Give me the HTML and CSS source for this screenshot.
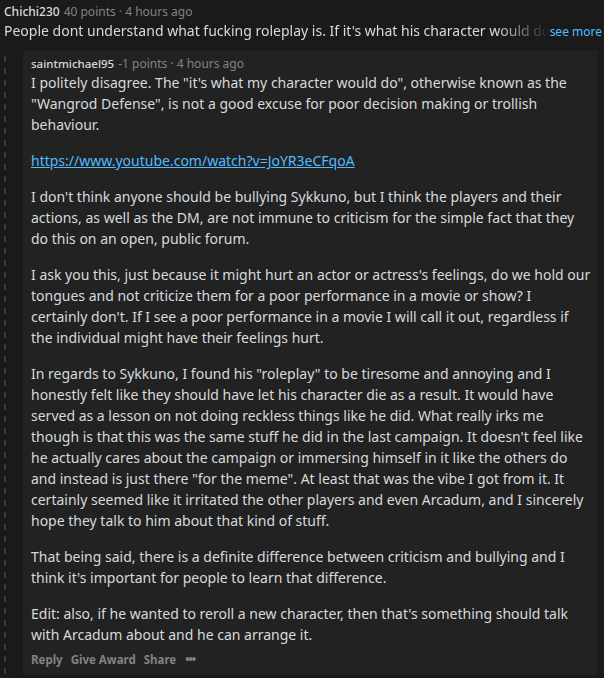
FILE: index.html
```html
<!DOCTYPE html>
<html>
<head>
<meta charset="utf-8">
<link rel="stylesheet" href="styles.css">
</head>
<body>
<div class="page">
  <div class="meta top-meta"><span class="user">Chichi230</span> <span class="sub">40 points · 4 hours ago</span></div>
  <div class="parent-line">
    <span class="parent-text">People dont understand what fucking roleplay is. If it's what his character would do, then it should be fine.</span>
    <a class="see-more">see more</a>
  </div>
  <div class="thread">
    <div class="rail"></div>
    <div class="card">
      <div class="meta"><span class="user small">saintmichael95</span> <span class="sub">-1 points · 4 hours ago</span></div>
      <div class="body">
        <p>I politely disagree. The "it's what my character would do", otherwise known as the "Wangrod Defense", is not a good excuse for poor decision making or trollish behaviour.</p>
        <p><a class="link">https://www.youtube.com/watch?v=JoYR3eCFqoA</a></p>
        <p>I don't think anyone should be bullying Sykkuno, but I think the players and their actions, as well as the DM, are not immune to criticism for the simple fact that they do this on an open, public forum.</p>
        <p>I ask you this, just because it might hurt an actor or actress's feelings, do we hold our tongues and not criticize them for a poor performance in a movie or show? I certainly don't. If I see a poor performance in a movie I will call it out, regardless if the individual might have their feelings hurt.</p>
        <p>In regards to Sykkuno, I found his "roleplay" to be tiresome and annoying and I honestly felt like they should have let his character die as a result. It would have served as a lesson on not doing reckless things like he did. What really irks me though is that this was the same stuff he did in the last campaign. It doesn't feel like he actually cares about the campaign or immersing himself in it like the others do and instead is just there "for the meme". At least that was the vibe I got from it. It certainly seemed like it irritated the other players and even Arcadum, and I sincerely hope they talk to him about that kind of stuff.</p>
        <p>That being said, there is a definite difference between criticism and bullying and I think it's important for people to learn that difference.</p>
        <p>Edit: also, if he wanted to reroll a new character, then that's something should talk with Arcadum about and he can arrange it.</p>
      </div>
      <div class="actions">
        <span>Reply</span><span>Give Award</span><span>Share</span><span class="dots">•••</span>
      </div>
    </div>
  </div>
</div>
</body>
</html>
```
FILE: styles.css
```css
html, body {
  margin: 0;
  padding: 0;
  background: #1a1a1b;
}
body {
  font-family: "Noto Sans", "Open Sans", sans-serif;
  color: #d7dadc;
}
.page {
  padding: 4px 4px 0 4px;
}
.meta {
  font-size: 12px;
  line-height: 16px;
  display: flex;
  gap: 4px;
}
.user {
  color: #d7dadc;
  font-weight: 500;
}
.user.small {
  font-size: 11.5px;
}
.sub {
  color: #818384;
}
.parent-line {
  display: flex;
  align-items: baseline;
  font-size: 14px;
  line-height: 21px;
  margin-right: -2px;
}
.parent-text {
  flex: 1;
  white-space: nowrap;
  overflow: hidden;
  -webkit-mask-image: linear-gradient(to right, #000 90%, transparent 100%);
  mask-image: linear-gradient(to right, #000 90%, transparent 100%);
}
.see-more {
  color: #4fbcff;
  font-size: 12px;
  white-space: nowrap;
}
.thread {
  display: flex;
  margin-top: 8px;
  margin-right: 2px;
}
.rail {
  width: 2px;
  margin-right: 17px;
  background: repeating-linear-gradient(to bottom, transparent 0 6px, #3a3a3b 6px 12px);
}
.card {
  flex: 1;
  background: #222223;
  border-radius: 4px;
  padding: 6px 7px 7px 8px;
}
.body {
  font-size: 14px;
  line-height: 21px;
}
.body p {
  margin: 0 0 15px 0;
}
.body p:last-child {
  margin-bottom: 0;
}
.link {
  color: #4fbcff;
  text-decoration: underline;
}
.actions {
  display: flex;
  gap: 8px;
  font-size: 11.5px;
  font-weight: 700;
  color: #818384;
  line-height: 16px;
  margin-top: 7px;
}
.dots {
  letter-spacing: -1px;
  margin-left: 1px;
}
```
